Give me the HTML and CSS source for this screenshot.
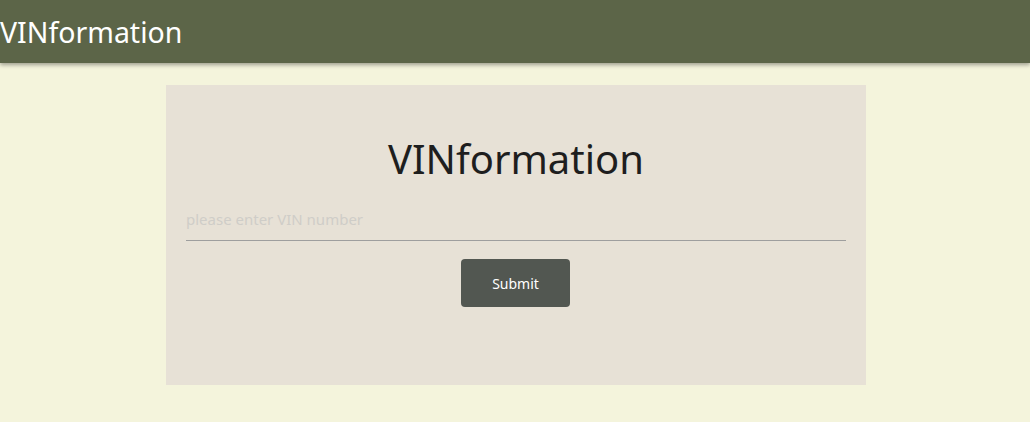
FILE: index.html
```html
<!DOCTYPE html>
<html>
<head>
<meta charset="utf-8">
<link rel="stylesheet" href="styles.css">
</head>
<body>
<header class="topbar">
  <span class="brand">VINformation</span>
</header>
<main class="main">
  <section class="card">
    <h1 class="title">VINformation</h1>
    <form class="form">
      <input class="vin-input" type="text" placeholder="please enter VIN number">
      <button class="submit" type="button">Submit</button>
    </form>
  </section>
</main>
</body>
</html>
```
FILE: styles.css
```css
* { box-sizing: border-box; }
html, body { margin: 0; padding: 0; }
body {
  background: #f4f4dc;
  font-family: "Noto Sans", "Open Sans", sans-serif;
  height: 422px;
}
.topbar {
  height: 63px;
  background: #5c6548;
  box-shadow: 0 2px 4px rgba(0,0,0,0.35);
  display: flex;
  align-items: center;
}
.brand {
  color: #ffffff;
  font-size: 28.5px;
  line-height: 1;
  margin-top: 1px;
}
.main {
  display: flex;
  justify-content: center;
  padding: 22px 0 0 2px;
}
.card {
  width: 700px;
  height: 300px;
  background: #e7e1d6;
  padding: 44px 20px 0;
}
.title {
  margin: 0;
  text-align: center;
  font-weight: 400;
  font-size: 40px;
  line-height: 60px;
  color: #1e1e1e;
}
.form {
  display: flex;
  flex-direction: column;
  align-items: center;
  margin-top: 16px;
}
.vin-input {
  width: 100%;
  height: 36px;
  border: none;
  border-bottom: 1px solid #9e9e9e;
  background: transparent;
  font-family: inherit;
  font-size: 15px;
  padding: 0 0 7px;
  outline: none;
}
.vin-input::placeholder { color: #cfcdc8; }
.submit {
  margin: 18px 1px 0 0;
  width: 109px;
  height: 48px;
  border: none;
  border-radius: 4px;
  background: #525751;
  color: #ffffff;
  font-family: inherit;
  font-size: 14px;
}
```
